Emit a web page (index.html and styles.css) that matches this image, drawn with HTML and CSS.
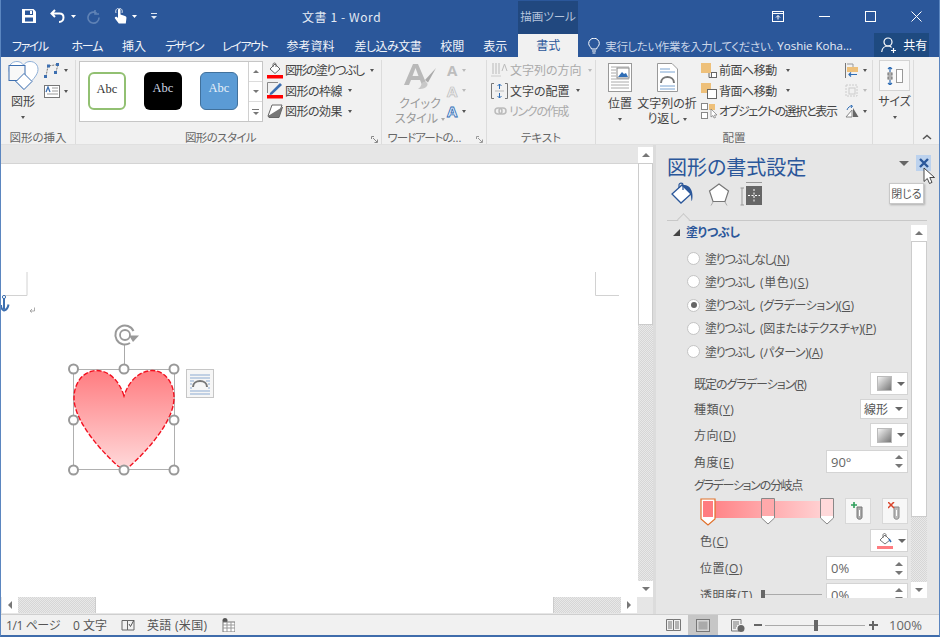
FILE: index.html
```html
<!DOCTYPE html>
<html lang="ja">
<head>
<meta charset="utf-8">
<title>文書 1 - Word</title>
<link rel="stylesheet" href="styles.css">
</head>
<body>
<div class="window">
  <header class="titlebar">
    <div class="qat">
      <svg class="q-save" width="14" height="14" viewBox="0 0 14 14"><path d="M0 0H11.5L14 2.5V14H0Z" fill="#fff"/><rect x="3" y="1.5" width="8" height="4.5" fill="#2b579a"/><rect x="3" y="8.5" width="8" height="4" fill="#2b579a"/><rect x="8" y="2" width="2" height="3" fill="#fff"/></svg>
      <svg class="q-undo" width="15" height="14" viewBox="0 0 15 14"><path d="M5 1 1.500 4.500 5 8M2 4.500H9.500C12 4.500 13.500 6.200 13.500 8.500S12 13 9 13" fill="none" stroke="#fff" stroke-width="2"/></svg>
      <svg class="q-drop" width="5" height="3" viewBox="0 0 5 3"><path d="M0 0H5L2.500 3Z" fill="#fff"/></svg>
      <svg class="q-redo" width="15" height="15" viewBox="0 0 15 15"><path d="M10.500 4A5.500 5.500 0 1 0 13 8.500M9 1V5H13" fill="none" stroke="#5f82b5" stroke-width="1.600"/></svg>
      <svg class="q-touch" width="13" height="17" viewBox="0 0 13 17"><path d="M4 7V2.200C4 .4 6.500 .4 6.500 2.200V6.500L11 8C12.400 8.500 12.600 9.300 12.400 10.500L11.800 15.500H4.800L1 10.500C.3 9.300 1.600 8 3 9L4 10Z" fill="#fff"/><path d="M2 5C1 2 3 0 5 0S9 2 8 5" fill="none" stroke="#fff" stroke-width=".8"/></svg>
      <svg class="q-drop2" width="5" height="3" viewBox="0 0 5 3"><path d="M0 0H5L2.500 3Z" fill="#fff"/></svg>
      <svg class="q-cust" width="6" height="6" viewBox="0 0 6 6"><path d="M0 0H6V1H0ZM0 3H6L3 6Z" fill="#dfe7f3"/></svg>
    </div>
    <div class="doc-title">文書 1 - Word</div>
    <div class="context-tab">描画ツール</div>
    <div class="winctl">
      <svg class="w-ribbon" width="12" height="11" viewBox="0 0 12 11"><rect x=".5" y=".5" width="11" height="10" fill="none" stroke="#fff"/><path d="M.5 2.500H11.500" stroke="#fff"/><path d="M6 8.500V4.500M4 6.500 6 4.500 8 6.500" fill="none" stroke="#fff"/></svg>
      <svg class="w-min" width="11" height="11" viewBox="0 0 11 11"><path d="M0 5.500H11" stroke="#fff"/></svg>
      <svg class="w-max" width="11" height="11" viewBox="0 0 11 11"><rect x=".5" y=".5" width="10" height="10" fill="none" stroke="#fff"/></svg>
      <svg class="w-close" width="11" height="11" viewBox="0 0 11 11"><path d="M.5.5 10.500 10.500M10.500.5.5 10.500" stroke="#fff"/></svg>
    </div>
  </header>

  <nav class="tabs">
    <span class="tab t1">ファイル</span>
    <span class="tab t2">ホーム</span>
    <span class="tab t3">挿入</span>
    <span class="tab t4">デザイン</span>
    <span class="tab t5">レイアウト</span>
    <span class="tab t6">参考資料</span>
    <span class="tab t7">差し込み文書</span>
    <span class="tab t8">校閲</span>
    <span class="tab t9">表示</span>
    <span class="tab-active">書式</span>
    <svg class="bulb" width="12" height="16" viewBox="0 0 12 16"><path d="M3.500 11C3 9 .7 8 .7 5.500A5.300 5.300 0 0 1 11.300 5.500C11.300 8 9 9 8.500 11ZM4 13H8M4.500 15H7.500" fill="none" stroke="#fff"/></svg>
    <span class="tellme">実行したい作業を入力してください.</span>
    <span class="user">Yoshie Koha…</span>
    <span class="share"><svg width="17" height="16" viewBox="0 0 17 16"><circle cx="7" cy="5" r="4" fill="none" stroke="#fff" stroke-width="1.200"/><path d="M.7 15C1 11 4 9 7 9S10 10 10.500 10.500M12.500 11V16M10 13.500H15" fill="none" stroke="#fff" stroke-width="1.200"/></svg>共有</span>
  </nav>

  <section class="ribbon">
    <div class="group g-insert">
      <div class="g-body">
        <div class="big b-shape">
          <svg width="31" height="31" viewBox="0 0 31 31"><path d="M22 1.500C19 1.500 17 3 15.500 5 14 3 12 1.500 9 1.500 4 1.500 1 5 1 9.500 1 15 7 21 15.500 29 24 21 30 15 30 9.500 30 5 27 1.500 22 1.500Z" fill="#fff" stroke="#8fb0d8"/><rect x="1" y="5.500" width="16" height="15" fill="#f8f8f8" stroke="#3d6fb0"/><path d="M16 13.500 24 21.500 16 29.500 8 21.500Z" fill="#fff" stroke="#3d6fb0"/></svg>
          <span class="big-label">図形</span>
          <i class="caret"></i>
        </div>
        <div class="smalls">
          <div class="smallbtn"><svg width="16" height="15" viewBox="0 0 16 15"><path d="M2 13.500 4 3 14 1.500 12 9" fill="none" stroke="#777" stroke-dasharray="2 1"/><path d="M0 12H3V15H0ZM3 1.500H6V4.500H3ZM12 0H15V3H12ZM10 8H13V11H10Z" fill="#3d6fb0"/></svg><i class="caret"></i></div>
          <div class="smallbtn second"><svg width="16" height="13" viewBox="0 0 16 13"><rect x=".5" y=".5" width="15" height="12" fill="#fff" stroke="#777"/><path d="M8 3H14M8 6H14M3 9H14" stroke="#999"/><path d="M2 7 4 2 6 7" fill="none" stroke="#3d6fb0" stroke-width="1.300"/></svg><i class="caret"></i></div>
        </div>
      </div>
      <div class="g-label">図形の挿入</div>
    </div>

    <div class="group g-style">
      <div class="g-body">
        <div class="gallery">
          <div class="thumbs">
            <span class="abc abc-g">Abc</span>
            <span class="abc abc-k">Abc</span>
            <span class="abc abc-b">Abc</span>
          </div>
          <div class="gal-scroll">
            <span class="gs"><i class="up"></i></span>
            <span class="gs"><i class="dn"></i></span>
            <span class="gs"><i class="more"></i></span>
          </div>
        </div>
        <div class="rows r-style">
          <div class="row-b"><svg width="16" height="17" viewBox="0 0 16 17"><path d="M8 2 13 7 8 11.500 3 7Z" fill="#fff" stroke="#666"/><path d="M6 5V2.500C6 .5 9 .5 9 2.500V5" fill="none" stroke="#666"/><rect y="13" width="16" height="3.500" fill="#f00"/></svg><span class="n15">図形の塗りつぶし</span><i class="caret"></i></div>
          <div class="row-b"><svg width="16" height="17" viewBox="0 0 16 17"><path d="M.5 11V.5H11" fill="none" stroke="#888"/><path d="M3 11 13 1 15 3 5 12.500 2.500 13Z" fill="#3d6fb0"/><rect y="13" width="16" height="3.500" fill="#f00"/></svg><span class="n5">図形の枠線</span><i class="caret"></i></div>
          <div class="row-b"><svg width="16" height="14" viewBox="0 0 16 14"><path d="M5 1H15L11 12H1Z" fill="#fff" stroke="#666"/><path d="M1 12 2 13.500H12L15.500 3" fill="#777" stroke="#666"/></svg><span class="n5">図形の効果</span><i class="caret"></i></div>
        </div>
      </div>
      <div class="g-label l-style">図形のスタイル<svg class="launch" width="7" height="7" viewBox="0 0 7 7"><path d="M.5 3V.5H3M2 2 6 6M3.500 6.500H6.500V3.500" fill="none" stroke="#888"/></svg></div>
    </div>

    <div class="group g-word">
      <div class="g-body">
        <div class="big b-quick dim">
          <svg width="33" height="28" viewBox="0 0 33 28"><path d="M0 22 9 1H14L23 22H18L16 17H7L5 22ZM8.500 13H14.500L11.500 5Z" fill="#b9b9b9"/><path d="M32 5 21 17 24 19.500Z" fill="#aaa"/><path d="M19 19C22 18 24 20 23.500 22 22 26 17 26 14 26 17 24.500 17 21 19 19Z" fill="#c8c8c8"/></svg>
          <span class="big-label two">クイック<br>スタイル <i class="caret inline"></i></span>
        </div>
        <div class="wa-col">
          <div class="wa dim-a">A<i class="caret pale"></i></div>
          <div class="wa dim-o">A<i class="caret pale"></i></div>
          <div class="wa blue-a">A<i class="caret"></i></div>
        </div>
      </div>
      <div class="g-label l-word">ワードアートの…<svg class="launch" width="7" height="7" viewBox="0 0 7 7"><path d="M.5 3V.5H3M2 2 6 6M3.500 6.500H6.500V3.500" fill="none" stroke="#999"/></svg></div>
    </div>

    <div class="group g-text">
      <div class="g-body">
        <div class="rows r-text">
          <div class="row-b off"><svg width="17" height="16" viewBox="0 0 17 16"><path d="M2 1V12M5 1V12M8 1V12" stroke="#ccc" stroke-width="1.500"/><path d="M0 14H10" stroke="#ccc"/><path d="M11 9 13.500 2 16 9" fill="none" stroke="#bbb"/></svg><span>文字列の方向</span><i class="caret pale"></i></div>
          <div class="row-b"><svg width="17" height="16" viewBox="0 0 17 16"><path d="M3 .5H.5V15.500H3M14 .5H16.500V15.500H14" fill="none" stroke="#777"/><path d="M8.500 1V6M8.500 10V15M6.500 3 8.500 1 10.500 3M6.500 13 8.500 15 10.500 13" fill="none" stroke="#2f6db5"/><path d="M4 8H13" stroke="#bbb"/></svg><span>文字の配置</span><i class="caret"></i></div>
          <div class="row-b off indent"><svg width="13" height="8" viewBox="0 0 13 8"><rect x="1" y="1" width="7" height="6" rx="3" fill="none" stroke="#bbb" stroke-width="1.500"/><rect x="5" y="1" width="7" height="6" rx="3" fill="none" stroke="#bbb" stroke-width="1.500"/></svg><span class="n13">リンクの作成</span></div>
        </div>
      </div>
      <div class="g-label">テキスト</div>
    </div>

    <div class="group g-arrange">
      <div class="g-body">
        <div class="big b-pos">
          <svg width="24" height="29" viewBox="0 0 24 29"><rect x=".5" y=".5" width="23" height="28" fill="#fff" stroke="#999"/><path d="M3 4H21M3 7H8M3 10H8M3 13H8M3 16H21M3 19H21M3 22H21M3 25H21" stroke="#aaa"/><rect x="9" y="5" width="12" height="10" fill="#fff" stroke="#888"/><path d="M10 14 14 9 16 11 18 10 20 14Z" fill="#2f6db5"/></svg>
          <span class="big-label">位置</span>
          <i class="caret"></i>
        </div>
        <div class="big b-wrap">
          <svg width="21" height="29" viewBox="0 0 21 29"><path d="M.5.5H15L20.500 6V28.500H.5Z" fill="#fff" stroke="#999"/><path d="M3 6H13M3 9H18M3 23H18M3 26H18" stroke="#7aa3d0"/><path d="M4 20C4 12 17 12 17 20" fill="none" stroke="#777" stroke-width="2"/></svg>
          <span class="big-label two">文字列の折<br>り返し <i class="caret inline dark"></i></span>
        </div>
        <div class="rows r-arr">
          <div class="row-b"><svg width="16" height="16" viewBox="0 0 16 16"><rect y="1" width="10" height="10" fill="#eec07a"/><rect x="10.500" y="10.500" width="5" height="5" fill="#fff" stroke="#666"/><path d="M8 11V15.500H10.500" fill="none" stroke="#666"/></svg><span class="n5">前面へ移動</span><i class="caret g8"></i></div>
          <div class="row-b"><svg width="16" height="16" viewBox="0 0 16 16"><rect y="0" width="10" height="10" fill="#eec07a"/><rect x="6.500" y="6.500" width="9" height="9" fill="#fff" stroke="#666"/></svg><span class="n5">背面へ移動</span><i class="caret g8"></i></div>
          <div class="row-b"><svg width="16" height="16" viewBox="0 0 16 16"><rect x=".5" y=".5" width="6" height="6" fill="#fff" stroke="#888"/><rect x="8" y="1" width="6" height="6" fill="#eec07a"/><rect x=".5" y="9.500" width="6" height="6" fill="#fff" stroke="#888"/><path d="M10 6V14L12 12.500 13 15 14.500 14.500 13.500 12H16Z" fill="#fff" stroke="#777" stroke-width=".7"/></svg><span class="n13">オブジェクトの選択と表示</span></div>
        </div>
        <div class="a-col">
          <div class="ac"><svg width="14" height="15" viewBox="0 0 14 15"><path d="M.5 0V15" stroke="#777"/><rect x="2" y="4" width="11" height="5" fill="#eec07a"/><path d="M2 1H8V4" fill="none" stroke="#999"/><path d="M12 11.500H4M6 9.500 4 11.500 6 13.500" fill="none" stroke="#2f6db5" stroke-width="1.200"/></svg><i class="caret"></i></div>
          <div class="ac"><svg width="14" height="15" viewBox="0 0 14 15"><rect x="1" y="2" width="11" height="11" fill="none" stroke="#ccc" stroke-dasharray="2 1"/><rect x="4" y="5" width="6" height="6" fill="none" stroke="#ccc"/></svg><i class="caret pale"></i></div>
          <div class="ac"><svg width="14" height="13" viewBox="0 0 14 13"><path d="M1 12 7 5V12Z" fill="#fff" stroke="#888"/><path d="M8 3 13.500 12H8Z" fill="#666"/><path d="M2 5C3 2 5 1 7 1M5.500 0 7.500 1 6 3" fill="none" stroke="#2f6db5"/></svg><i class="caret"></i></div>
        </div>
      </div>
      <div class="g-label">配置</div>
    </div>

    <div class="group g-size">
      <div class="g-body">
        <div class="big b-size">
          <span class="size-box"><svg width="16" height="18" viewBox="0 0 16 18"><path d="M3 0V5M3 13V18M1 2 3 0 5 2M1 16 3 18 5 16" fill="none" stroke="#2f6db5" stroke-width="1.200"/><rect x="1" y="6" width="4" height="2" fill="none" stroke="#666"/><rect x="1" y="10" width="4" height="2" fill="none" stroke="#666"/><rect x="9.500" y="2.500" width="6" height="13" fill="#fff" stroke="#999"/></svg></span>
          <span class="big-label">サイズ</span>
          <i class="caret"></i>
        </div>
      </div>
      <div class="g-label">&nbsp;</div>
    </div>
    <div class="collapse"><svg width="10" height="6" viewBox="0 0 10 6"><path d="M1 5 5 1.500 9 5" fill="none" stroke="#555" stroke-width="1.500"/></svg></div>
  </section>

  <main class="main">
    <div class="doc-col">
      <div class="doc-band"></div>
      <div class="canvas">
        <svg class="stage" width="637" height="433" viewBox="1 164 637 433">
          <defs>
            <linearGradient id="hg" x1="0" y1="0" x2="0" y2="1"><stop offset="0" stop-color="#ff7c80"/><stop offset="1" stop-color="#ffd9da"/></linearGradient>
          </defs>
          <path d="M27 272V295.500H3M595.500 272V295.500H619" fill="none" stroke="#d2d2d2"/>
          <path d="M4 298V309M1 305C1 308 2.500 310 4 310.500 6 310 8 308 8.500 304.500" fill="none" stroke="#3d6fb0" stroke-width="2"/><circle cx="4" cy="297" r="1.600" fill="none" stroke="#3d6fb0"/>
          <path d="M34.500 307.500V311H30.500M32 309 30 311 32 312.500" fill="none" stroke="#888" stroke-width=".7"/>
          <path d="M124.500 345V369" stroke="#aaa"/>
          <path d="M133.500 331A9.500 9.500 0 1 0 130 343" fill="none" stroke="#999" stroke-width="2"/>
          <circle cx="125" cy="335" r="5" fill="none" stroke="#999" stroke-width="1.800"/>
          <path d="M129 335.500H139L133 342Z" fill="#999"/>
          <rect x="73.500" y="369.500" width="101" height="100" fill="none" stroke="#b0b0b0"/>
          <path d="M124 396C119 380 109 371 97 370.500 83 370.500 74 383 74 398 74 421 101 451 118 466 122 469 126 469 130 466 147 451 174 421 174 398 174 383 165 370.500 152 370.500 140 371 129 380 124 396Z" fill="url(#hg)" stroke="#f2101f" stroke-width="1.400" stroke-dasharray="5 2"/>
          <g fill="#fff" stroke="#999" stroke-width="2">
            <circle cx="73.500" cy="369" r="4.500"/><circle cx="124" cy="369" r="4.500"/><circle cx="174" cy="369" r="4.500"/>
            <circle cx="73.500" cy="420" r="4.500"/><circle cx="174" cy="420" r="4.500"/>
            <circle cx="73.500" cy="470" r="4.500"/><circle cx="124" cy="470" r="4.500"/><circle cx="174" cy="470" r="4.500"/>
          </g>
          <rect x="186.500" y="369.500" width="27" height="28" fill="#f6f6f6" stroke="#c6c6c6"/>
          <path d="M190 375H210M190 378H210M190 391H210M190 394H210M190 381H194M206 381H210M190 384H192M208 384H210M190 388H192M208 388H210" stroke="#8cabd2"/>
          <path d="M193 387C193 379 207 379 207 387" fill="none" stroke="#777" stroke-width="2"/>
        </svg>
      </div>
      <div class="hscroll">
        <span class="sbtn"><i class="left"></i></span>
        <span class="h-track t-a"></span>
        <span class="h-thumb"></span>
        <span class="h-track t-b"></span>
        <span class="sbtn"><i class="right"></i></span>
      </div>
    </div>
    <div class="vscroll">
      <span class="sbtn up-b"><i class="up"></i></span>
      <span class="v-thumb"></span>
      <span class="v-track"></span>
      <span class="sbtn"><i class="dn"></i></span>
    </div>

    <aside class="pane">
      <div class="pane-head">
        <h1 class="pane-title">図形の書式設定</h1>
        <i class="pane-menu"></i>
        <span class="pane-close"><svg width="10" height="10" viewBox="0 0 10 10"><path d="M1 1 9 9M9 1 1 9" stroke="#2b579a" stroke-width="2.400"/></svg></span>
      </div>
      <div class="pane-icons">
        <svg width="24" height="24" viewBox="0 0 24 24"><path d="M11 3 20 12 10 21 1 12Z" fill="#fff" stroke="#2b579a" stroke-width="1.300"/><path d="M8 6V3C8 .5 12 .5 12 3V8" fill="none" stroke="#2b579a" stroke-width="1.200"/><path d="M11 3 14 3C19 4 21.500 8 21.500 14 21.500 17 21 19 20.500 19 20 16 20 13 19.500 11.500Z" fill="#2b579a"/></svg>
        <svg width="22" height="24" viewBox="0 0 22 24"><path d="M11 2 20.500 9 17 19.500H5L1.500 9Z" fill="#fff" stroke="#777" stroke-width="1.200"/><path d="M5 20 3 23.500M17 20 19 23.500" stroke="#aaa"/></svg>
        <svg class="pi-size" width="23" height="24" viewBox="0 0 23 24"><path d="M6 .5H22M.5 6H4M.5 23H4M2 6V23" stroke="#999"/><rect x="6" y="4" width="16" height="19" fill="#666"/><path d="M14 7V20M8 13.500H20" stroke="#fff" stroke-dasharray="2 1.500"/></svg>
      </div>
      <div class="pane-rule"><i></i></div>

      <div class="pane-scrollarea">
        <div class="pane-content">
          <div class="sec-head"><i class="tri"></i><b>塗りつぶし</b></div>
          <div class="radios">
            <label class="radio"><i class="dot"></i><span><span class="k">塗りつぶしなし</span>(<u>N</u>)</span></label>
            <label class="radio"><i class="dot"></i><span><span class="k">塗りつぶし</span> <span class="p">(単色)(<u>S</u>)</span></span></label>
            <label class="radio"><i class="dot on"></i><span><span class="k">塗りつぶし</span> <span class="q">(グラデーション)</span>(<u>G</u>)</span></label>
            <label class="radio"><i class="dot"></i><span><span class="k">塗りつぶし</span> <span class="q">(図またはテクスチャ)</span>(<u>P</u>)</span></label>
            <label class="radio"><i class="dot"></i><span><span class="k">塗りつぶし</span> <span class="q">(パターン)</span>(<u>A</u>)</span></label>
          </div>
          <div class="fld f-first"><span class="lab n10">既定のグラデーション(<u>R</u>)</span><span class="pick"><i class="swatch"></i><i class="caret big-c"></i></span></div>
          <div class="fld f-short"><span class="lab">種類(<u>Y</u>)</span><span class="combo">線形<i class="caret big-c"></i></span></div>
          <div class="fld f-24"><span class="lab">方向(<u>D</u>)</span><span class="pick p24"><i class="swatch"></i><i class="caret big-c"></i></span></div>
          <div class="fld f-tight"><span class="lab">角度(<u>E</u>)</span><span class="spin">90°<span class="spin-btn"><i class="up"></i><i class="dn"></i></span></span></div>
          <div class="grad-title">グラデーションの分岐点</div>
          <div class="grad-row">
            <div class="grad-bar">
              <svg class="stop s0" width="16" height="28" viewBox="0 0 16 28"><path d="M1 1H15V21L8 27 1 21Z" fill="#fff" stroke="#e0702a" stroke-width="1.200"/><rect x="3" y="3" width="10" height="16" fill="#ff7c80"/></svg>
              <svg class="stop s1" width="14" height="27" viewBox="0 0 14 27"><path d="M.5.5H13.500V20L7 26 .5 20Z" fill="#fff" stroke="#888"/><rect x="1" y="1" width="12" height="17" fill="#ffa9ab"/></svg>
              <svg class="stop s2" width="14" height="27" viewBox="0 0 14 27"><path d="M.5.5H13.500V20L7 26 .5 20Z" fill="#fff" stroke="#888"/><rect x="1" y="1" width="12" height="17" fill="#ffd9da"/></svg>
            </div>
            <span class="tool"><svg width="14" height="19" viewBox="0 0 14 19"><path d="M6 5H11V15C11 18 6 18 6 15Z" fill="#aaa" stroke="#777"/><path d="M8.500 8V14" stroke="#fff"/><path d="M3 0V6M0 3H6" stroke="#2e9e5b" stroke-width="1.600"/></svg></span>
            <span class="tool"><svg width="14" height="19" viewBox="0 0 14 19"><path d="M6 5H11V15C11 18 6 18 6 15Z" fill="#bbb" stroke="#888"/><path d="M8.500 8V14" stroke="#fff"/><path d="M0 0 6 6M6 0 0 6" stroke="#d9442b" stroke-width="1.500"/></svg></span>
          </div>
          <div class="fld f-color"><span class="lab ind">色(<u>C</u>)</span><span class="pick"><svg width="16" height="18" viewBox="0 0 16 18"><path d="M8 3 13 8 8 12 3 8Z" fill="#fff" stroke="#777"/><path d="M6 6V3C6 1 9 1 9 3V5" fill="none" stroke="#777"/><path d="M12 7 14 10" stroke="#2f6db5" stroke-width="1.500"/><rect y="14" width="16" height="3" fill="#ff7c80"/></svg><i class="caret big-c"></i></span></div>
          <div class="fld f-24b"><span class="lab ind">位置(<u>O</u>)</span><span class="spin s24">0%<span class="spin-btn"><i class="up"></i><i class="dn"></i></span></span></div>
          <div class="fld f-tight clip-row"><span class="lab ind">透明度(<u>T</u>)</span><span class="slider"><i></i></span><span class="spin spin-trans">0%<span class="spin-btn"><i class="up"></i><i class="dn"></i></span></span></div>
        </div>
        <div class="pane-sb">
          <span class="sbtn up-p"><i class="up"></i></span>
          <span class="ps-thumb"></span>
          <span class="ps-track"></span>
          <span class="sbtn dn-p"><i class="dn"></i></span>
        </div>
      </div>
      <div class="tooltip">閉じる</div>
      <svg class="cursor" width="13" height="18" viewBox="0 0 13 18"><path d="M1 1V14.500L4.300 11.500 6.500 16.500 9 15.400 6.800 10.500H11.500Z" fill="#fff" stroke="#333" stroke-width=".9"/></svg>
    </aside>
  </main>

  <footer class="status">
    <span class="st s-page">1/1 ページ</span>
    <span class="st s-words">0 文字</span>
    <svg class="s-proof" width="14" height="12" viewBox="0 0 14 12"><path d="M6.500 1.500H1V11H6.500ZM6.500 1.500H13V11H6.500Z" fill="none" stroke="#666"/><path d="M8 5 9.500 7.500 13 1" fill="none" stroke="#555"/></svg>
    <span class="st s-lang">英語 (米国)</span>
    <svg class="s-macro" width="13" height="14" viewBox="0 0 13 14"><circle cx="3" cy="2.500" r="2.500" fill="#555"/><rect x="1" y="4" width="12" height="10" fill="#fff" stroke="#777"/><path d="M1 7H13M1 10H13M5 4V14M9 4V14" stroke="#999"/></svg>
    <div class="s-right">
      <svg class="s-read" width="15" height="12" viewBox="0 0 15 12"><path d="M.5.5H7.500V11.500H.5ZM7.500.5H14.500V11.500H7.500ZM2 3H6M2 5H6M2 7H6M2 9H6M9 3H13M9 5H13M9 7H13M9 9H13" fill="none" stroke="#777"/></svg>
      <span class="s-print"><svg width="14" height="13" viewBox="0 0 14 13"><rect x=".5" y=".5" width="13" height="12" fill="#d4d4d4" stroke="#777"/><rect x="2.500" y="2.500" width="9" height="8" fill="#aaa"/></svg></span>
      <svg class="s-web" width="14" height="13" viewBox="0 0 14 13"><path d="M8 12H.5V.5H10V5M2 3H8M2 5H8M2 7H6M2 9H5" fill="none" stroke="#777"/><circle cx="10" cy="9.500" r="3.500" fill="#666"/></svg>
      <span class="zoom-minus"></span>
      <span class="zoom-track"><i></i></span>
      <span class="zoom-plus"></span>
      <span class="st s-zoom">100%</span>
    </div>
  </footer>
</div>
</body>
</html>
```

FILE: styles.css
```css
* { box-sizing: border-box; }
html, body { margin: 0; padding: 0; }
body {
  width: 940px; height: 637px; overflow: hidden;
  font-family: "Open Sans", "Noto Sans CJK JP", sans-serif;
  font-size: 12px; color: #444;
  font-feature-settings: "palt" 1;
}
i { display: block; font-style: normal; }
svg { display: block; flex: none; }
u { text-underline-offset: 1px; }

.n15 { letter-spacing: -1.500px; }
.n13 { letter-spacing: -1.300px; }
.n10 { letter-spacing: -1px; }
.n5 { letter-spacing: -.5px; }

.window {
  width: 940px; height: 637px; display: flex; flex-direction: column;
  border-left: 1px solid #5b86c0; border-right: 1px solid #5b86c0; border-bottom: 2px solid #3f6cab;
  background: #f1f1f1;
}

/* caret */
.caret { width: 0; height: 0; border-left: 2.500px solid transparent; border-right: 2.500px solid transparent; border-top: 3px solid #555; flex: none; }
.caret.pale { border-top-color: #bbb; }
.caret.inline { display: inline-block; vertical-align: middle; border-top-color: #aaa; }
.caret.inline.dark { border-top-color: #555; }

/* title bar */
.titlebar {
  height: 34px; background: #2b579a; flex: none;
  display: grid; grid-template-columns: 301px 216px 60px 1fr;
  color: #fff;
}
.qat { display: flex; align-items: center; height: 32px; padding-left: 21px; }
.q-undo { margin-left: 14px; }
.q-drop { margin-left: 6px; }
.q-redo { margin-left: 10px; }
.q-touch { margin-left: 13px; }
.q-drop2 { margin-left: 5px; }
.q-cust { margin-left: 14px; }
.doc-title { line-height: 34px; font-size: 12px; color: #e4eaf4; letter-spacing: .6px; font-family: "Noto Sans CJK JP", sans-serif; }
.context-tab { background: #21487f; margin-top: 1px; text-align: center; line-height: 32px; color: #b5c4dc; font-size: 11.500px; }
.winctl { display: flex; align-items: center; height: 32px; padding-left: 194px; }
.w-min { margin-left: 35px; }
.w-max { margin-left: 35px; }
.w-close { margin-left: 35px; }

/* tabs */
.tabs {
  height: 23px; background: #2b579a; flex: none; display: flex; align-items: center;
  color: #fff; font-size: 12px; padding-left: 11px;
}
.tab { white-space: nowrap; color: #f1f4f9; }
.t1 { letter-spacing: -1.500px; }
.t2 { margin-left: 24px; letter-spacing: -1.300px; }
.t3 { margin-left: 20px; }
.t4 { margin-left: 19px; letter-spacing: -1.500px; }
.t5 { margin-left: 19px; letter-spacing: -1.400px; }
.t6 { margin-left: 19px; }
.t7 { margin-left: 20px; letter-spacing: -.5px; }
.t8 { margin-left: 19px; }
.t9 { margin-left: 19px; }
.tab-active {
  margin-left: 11px; width: 60px; height: 23px; background: #f1f1f1; color: #2b579a;
  text-align: center; line-height: 23px;
}
.bulb { margin-left: 10px; }
.tellme { margin-left: 5px; color: #c9d5e8; font-size: 11.500px; white-space: nowrap; width: 172px; letter-spacing: -.4px; }
.user { color: #e8edf5; white-space: nowrap; width: 97px; font-size: 11.500px; }
.share {
  width: 55px; height: 24px; background: #1e4a80; display: flex; align-items: center; gap: 5px;
  padding-left: 7px; color: #fff; margin-top: -1px; white-space: nowrap; flex: none;
}

/* ribbon */
.ribbon {
  height: 88px; flex: none; display: flex; position: relative; background: #f1f1f1;
  border-bottom: 1px solid #e0e0e0; padding-top: 3px;
}
.group { display: flex; flex-direction: column; border-right: 1px solid #dcdcdc; height: 84px; }
.g-body { flex: 1; display: flex; min-height: 0; }
.g-label { height: 14px; flex: none; text-align: center; line-height: 16px; font-size: 11.500px; color: #666; position: relative; white-space: nowrap; }
.l-style { padding-right: 16px; letter-spacing: -.6px; }
.l-word { padding-right: 20px; letter-spacing: -1px; }
.launch { position: absolute; right: 3px; bottom: 1px; }
.g-insert { width: 75px; }
.g-style { width: 306px; }
.g-word { width: 105px; }
.g-text { width: 109px; }
.g-arrange { width: 277px; }
.g-size { width: 41px; }

.big { display: flex; flex-direction: column; align-items: center; flex: none; }
.big-label { line-height: 16px; font-size: 12px; text-align: center; white-space: nowrap; }

.b-shape { width: 34px; margin-left: 5px; }
.b-shape .big-label { margin-top: 3px; }
.b-shape .caret { margin-top: 6px; }
.smalls { margin-left: 4px; padding-top: 2px; }
.smallbtn { display: flex; align-items: center; gap: 2px; height: 17px; width: 26px; }
.smallbtn.second { margin-top: 4px; }
.smallbtn .caret { margin-left: 2px; }

.gallery { width: 184px; height: 61px; margin-left: 3px; margin-top: 1px; background: #fff; border: 1px solid #c6c6c6; display: flex; flex: none; }
.thumbs { flex: 1; display: flex; gap: 18px; padding: 10px 0 0 8px; }
.abc {
  width: 38px; height: 38px; border-radius: 6px; text-align: center; line-height: 33px;
  font-family: "Liberation Serif", serif; font-size: 12.500px; flex: none;
}
.abc-g { background: #fff; border: 2px solid #92c072; color: #333; line-height: 31px; }
.abc-k { background: #000; color: #cfd8e6; }
.abc-b { background: #5b9bd5; border: 1px solid #41719c; color: #e8f0f8; line-height: 31px; }
.gal-scroll { width: 14px; border-left: 1px solid #d0d0d0; display: flex; flex-direction: column; }
.gs { flex: 1; display: flex; align-items: center; justify-content: center; border-bottom: 1px solid #dcdcdc; }
.gs:last-child { border-bottom: 0; }
.up { width: 0; height: 0; border-left: 4px solid transparent; border-right: 4px solid transparent; border-bottom: 4px solid #777; }
.dn { width: 0; height: 0; border-left: 4px solid transparent; border-right: 4px solid transparent; border-top: 4px solid #777; }
.gs .up, .gs .dn { border-width: 3px; border-left-color: transparent; border-right-color: transparent; }
.gs .up { border-top: 0; }
.gs .dn { border-bottom: 0; }
.more { width: 7px; height: 6px; border-top: 1px solid #777; position: relative; }
.more::after { content: ""; position: absolute; top: 2px; left: .5px; border-left: 3px solid transparent; border-right: 3px solid transparent; border-top: 3px solid #777; }

.rows { display: flex; flex-direction: column; flex: none; }
.row-b { display: flex; align-items: center; height: 20.500px; gap: 2px; white-space: nowrap; }
.row-b .caret { margin-left: 4px; }
.r-style { margin-left: 4px; }
.off { color: #aaa; }
.indent { padding-left: 3px; }
.r-text { margin-left: 4px; }
.r-arr { margin-left: 4px; }
.g8 { margin-left: 7px !important; }

.b-quick { width: 50px; margin-left: 13px; padding-top: 3px; color: #999; }
.b-quick .big-label.two { line-height: 15px; margin-top: 5px; }
.dim { color: #9a9a9a; }
.wa-col { margin-left: 2px; }
.wa {
  height: 20.500px; display: flex; align-items: center; gap: 5px;
  font-size: 15px; font-weight: 700; font-family: "Open Sans", sans-serif;
}
.dim-a { color: #bdbdbd; }
.dim-o { color: #ececec; -webkit-text-stroke: .7px #bbb; }
.blue-a { color: #e9f1fb; -webkit-text-stroke: .8px #2f6db5; }

.b-pos { width: 34px; margin-left: 7px; padding-top: 3px; }
.b-pos .big-label { margin-top: 4px; }
.b-pos .caret { margin-top: 6px; }
.b-wrap { width: 60px; margin-left: 0; padding-top: 3px; }
.b-wrap .big-label { margin-top: 4px; line-height: 15px; }
.a-col { margin-left: 8px; }
.ac { height: 20.500px; display: flex; align-items: center; gap: 4px; }

.b-size { width: 40px; padding-left: 3px; }
.size-box { width: 31px; height: 31px; border: 1px solid #d4d4d4; background: #f8f8f8; display: flex; align-items: center; justify-content: center; }
.b-size .big-label { margin-top: 3px; }
.b-size .caret { margin-top: 6px; }
.collapse { position: absolute; right: 7px; bottom: 4px; }

/* main */
.main { flex: 1; display: flex; min-height: 0; background: #e6e6e6; }
.doc-col { width: 637px; display: flex; flex-direction: column; flex: none; }
.doc-band { height: 19px; background: #e6e6e6; border-bottom: 1px solid #d4d4d4; flex: none; }
.canvas { flex: 1; background: #fff; position: relative; overflow: hidden; min-height: 0; }
.stage { position: absolute; left: 0; top: 0; }
.hscroll { height: 17px; flex: none; display: flex; padding-left: 1px; padding-right: 1px; background: #e6e6e6; }
.sbtn { display: flex; align-items: center; justify-content: center; background: #fff; flex: none; }
.hscroll .sbtn { width: 16px; height: 16px; }
.left { width: 0; height: 0; border-top: 4px solid transparent; border-bottom: 4px solid transparent; border-right: 4px solid #777; }
.right { width: 0; height: 0; border-top: 4px solid transparent; border-bottom: 4px solid transparent; border-left: 4px solid #777; }
.h-track { height: 16px; background: repeating-conic-gradient(#e8e8e8 0 25%, #d6d6d6 0 50%) 0 0 / 2px 2px; }
.t-a { width: 77px; }
.h-thumb { width: 460px; height: 16px; background: #fff; border-left: 1px solid #ccc; border-right: 1px solid #ccc; }
.t-b { width: 67px; }

.vscroll { width: 18px; flex: none; display: flex; flex-direction: column; padding-top: 2px; padding-bottom: 17px; border-right: 3px solid #dcdcdc; }
.vscroll .sbtn { height: 16px; width: 15px; }
.v-thumb { height: 162px; background: #fff; border: 1px solid #ccc; flex: none; }
.v-track { flex: 1; background: repeating-conic-gradient(#e8e8e8 0 25%, #d6d6d6 0 50%) 0 0 / 2px 2px; }

/* pane */
.pane { flex: 1; min-width: 0; position: relative; background: #e6e6e6; padding: 9px 12px 16px 11px; display: flex; flex-direction: column; }
.pane-head { display: flex; align-items: center; height: 26px; flex: none; }
.pane-title { margin: 0; font-weight: 400; font-size: 20px; line-height: 26px; color: #2b579a; font-family: "Noto Sans CJK JP", sans-serif; white-space: nowrap; }
.pane-menu { margin-left: auto; border-left: 5px solid transparent; border-right: 5px solid transparent; border-top: 5px solid #666; margin-right: 7px; margin-top: -8px; }
.pane-close { width: 15px; height: 16px; background: #bcd2ee; display: flex; align-items: center; justify-content: center; margin-top: -9px; margin-right: -4px; }
.pane-icons { display: flex; gap: 13px; height: 24px; flex: none; margin-top: 2px; padding-left: 4px; }
.pi-size { margin-left: -3px; }
.pane-rule { height: 1px; flex: none; background: #c8c8c8; margin-top: 14px; position: relative; }
.pane-rule i { position: absolute; left: 12px; top: -5px; width: 9px; height: 9px; background: #e6e6e6; border-left: 1px solid #c8c8c8; border-top: 1px solid #c8c8c8; transform: rotate(45deg); }
.pane-scrollarea { flex: 1; min-height: 0; display: flex; margin-top: 1px; overflow: hidden; }
.pane-content { width: 241px; flex: none; overflow: hidden; }
.sec-head { height: 20px; display: flex; align-items: center; color: #2b579a; font-size: 12px; }
.sec-head b { margin-left: 6px; font-weight: 700; letter-spacing: -.3px; }
.tri { width: 0; height: 0; margin-left: 6px; border-left: 7px solid transparent; border-bottom: 7px solid #444; }
.radios { margin-top: 5px; }
.radio { display: flex; align-items: center; height: 23.250px; padding-left: 20px; color: #555; white-space: nowrap; }
.radio > span { margin-left: 5px; }
.k { letter-spacing: -1.200px; }
.p { margin-left: 3px; letter-spacing: .6px; }
.q { margin-left: 3px; letter-spacing: -.4px; }
.dot { width: 13px; height: 13px; border-radius: 50%; background: #fff; border: 1px solid #c4c4c4; position: relative; flex: none; }
.dot.on::after { content: ""; position: absolute; left: 2.500px; top: 2.500px; width: 6px; height: 6px; border-radius: 50%; background: #666; }

.fld { display: flex; align-items: center; height: 23px; margin-top: 4px; }
.f-first { margin-top: 9px; }
.f-short { height: 20px; }
.f-24 { height: 24px; }
.f-24b { height: 24px; margin-top: 4px; }
.f-tight { margin-top: 3px; }
.f-color { margin-top: 3px; }
.clip-row { height: 23px; }
.lab { padding-left: 27px; color: #555; white-space: nowrap; letter-spacing: .5px; }
.lab.n10 { letter-spacing: -1px; }
.lab.ind { padding-left: 33px; }
.pick { margin-left: auto; width: 38px; height: 100%; background: #fff; border: 1px solid #d4d4d4; display: flex; align-items: center; padding-left: 6px; gap: 5px; }
.swatch { width: 15px; height: 15px; background: linear-gradient(135deg, #f4f4f4, #777); border: 1px solid #bbb; }
.big-c { border-left-width: 4px; border-right-width: 4px; border-top-width: 4px; border-top-color: #666; }
.combo { margin-left: auto; width: 48px; height: 100%; background: #fff; border: 1px solid #d4d4d4; display: flex; align-items: center; padding-left: 3px; gap: 7px; color: #555; }
.spin { margin-left: auto; width: 82px; height: 100%; background: #fff; border: 1px solid #d4d4d4; display: flex; align-items: center; padding-left: 4px; color: #666; font-size: 13px; justify-content: space-between; flex: none; }
.spin-btn { display: flex; flex-direction: column; gap: 5px; padding-right: 4px; }
.spin-btn .up, .spin-btn .dn { border-width: 4px; border-left-color: transparent; border-right-color: transparent; }
.spin-btn .up { border-top: 0; }
.spin-btn .dn { border-bottom: 0; }
.slider { width: 61px; height: 1px; background: #aaa; margin-left: auto; position: relative; flex: none; }
.slider i { position: absolute; left: 0; top: -4px; width: 4px; height: 9px; background: #666; }
.spin-trans { margin-left: 4px; }
.grad-title { height: 18px; line-height: 18px; margin-top: 4px; padding-left: 27px; color: #555; letter-spacing: -1.300px; }
.grad-row { display: flex; margin-top: 3px; height: 28px; align-items: flex-start; }
.grad-bar { width: 132px; height: 17px; margin-left: 35px; margin-top: 3px; position: relative; background: linear-gradient(90deg, #ff7c80, #ffd9da); flex: none; }
.stop { position: absolute; top: -3px; }
.s0 { left: -2px; }
.s1 { left: 59px; }
.s2 { left: 118px; }
.tool { width: 26px; height: 26px; background: #f7f7f7; border: 1px solid #d8d8d8; display: flex; align-items: center; justify-content: center; flex: none; margin-left: 11px; }

.pane-sb { width: 16px; margin-left: 3px; flex: none; display: flex; flex-direction: column; padding-top: 3px; }
.pane-sb .sbtn { height: 16px; width: 16px; }
.ps-thumb { height: 276px; background: #fff; border: 1px solid #ccc; flex: none; }
.ps-track { flex: 1; background: repeating-conic-gradient(#e8e8e8 0 25%, #d6d6d6 0 50%) 0 0 / 2px 2px; }

.tooltip { position: absolute; left: 233px; top: 38px; width: 35px; height: 21px; background: #fff; border: 1px solid #c8c8c8; box-shadow: 1px 1px 2px rgba(0,0,0,.25); text-align: center; line-height: 19px; font-size: 11px; color: #555; }
.cursor { position: absolute; left: 267px; top: 22px; }

/* status */
.status { height: 21px; flex: none; display: flex; align-items: center; background: #f1f1f1; border-top: 1px solid #cfcfcf; color: #555; }
.st { white-space: nowrap; }
.s-page { margin-left: 5px; letter-spacing: -.4px; }
.s-words { margin-left: 13px; }
.s-proof { margin-left: 14px; }
.s-lang { margin-left: 12px; letter-spacing: .3px; }
.s-macro { margin-left: 15px; }
.s-right { margin-left: auto; display: flex; align-items: center; height: 100%; }
.s-read { margin-right: 7px; }
.s-print { width: 30px; height: 100%; background: #c6c6c6; display: flex; align-items: center; justify-content: center; }
.s-web { margin-left: 13px; }
.zoom-minus { width: 8px; height: 2px; background: #666; margin-left: 9px; }
.zoom-track { width: 100px; height: 1px; background: #aaa; margin-left: 3px; position: relative; }
.zoom-track i { position: absolute; left: 49px; top: -5px; width: 4px; height: 11px; background: #666; }
.zoom-plus { width: 9px; height: 9px; margin-left: 4px; background: linear-gradient(#666, #666) center / 9px 2px no-repeat, linear-gradient(#666, #666) center / 2px 9px no-repeat; }
.s-zoom { margin-left: 11px; margin-right: 17px; font-size: 13px; color: #666; }
```
